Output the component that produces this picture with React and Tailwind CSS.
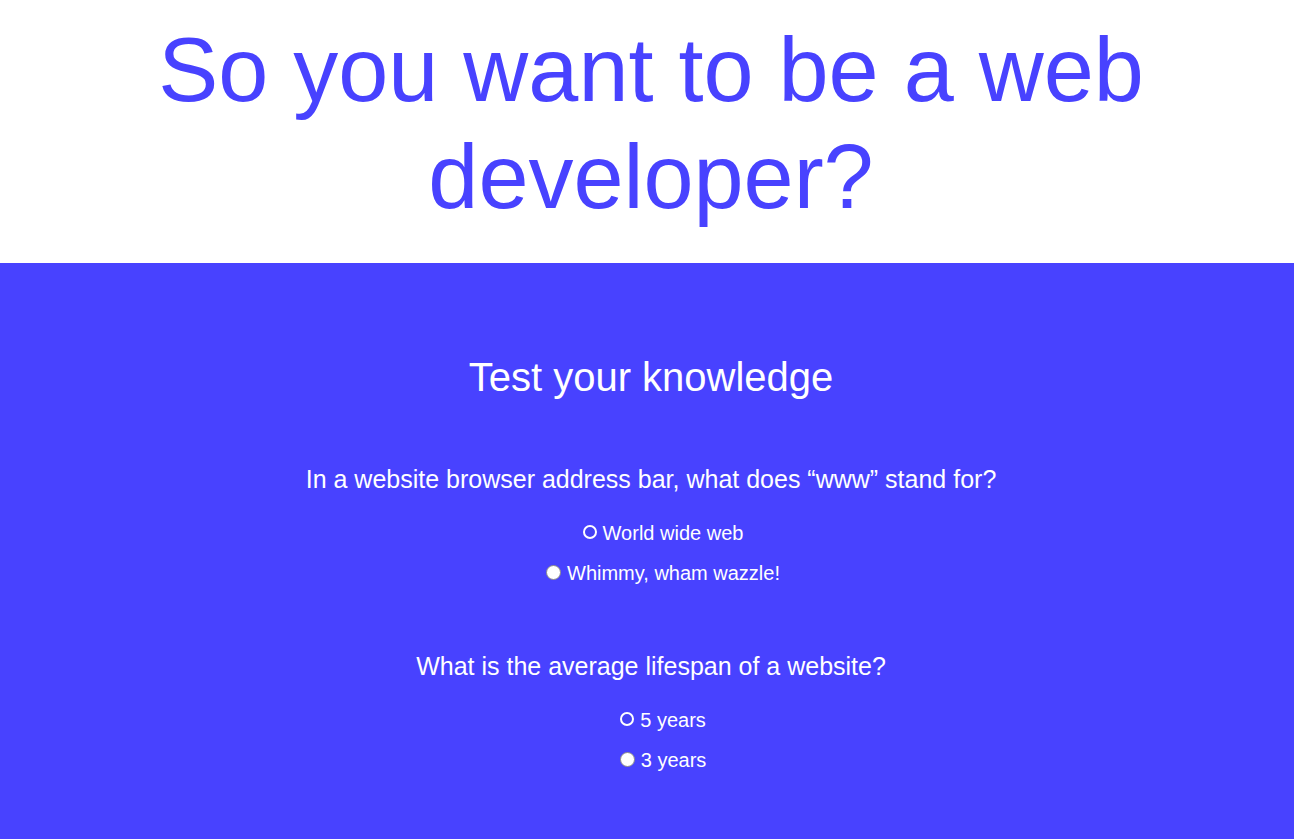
import React from "react";

function Radio({ checked }) {
  return checked ? (
    <span className="inline-block w-[14px] h-[14px] rounded-full border-2 border-white bg-[#4541f5] mr-[6px] box-border -translate-y-[1px]" />
  ) : (
    <span className="inline-block w-[15px] h-[15px] rounded-full border border-[#8a8a8a] bg-white mr-[6px] box-border -translate-y-[1px]" />
  );
}

function Option({ label, checked }) {
  return (
    <label className="flex items-center justify-center h-[40px] text-[20px] text-white pl-[24px]">
      <Radio checked={checked} />
      <span>{label}</span>
    </label>
  );
}

export default function App() {
  return (
    <div className="min-h-[839px] bg-[#4842ff]" style={{ fontFamily: '"Liberation Sans", Arial, sans-serif' }}>
      <header className="bg-white h-[263px] pt-[17px] text-center pl-[8px]">
        <h1 className="text-[90px] leading-[107px] text-[#4842ff] px-[140px]">So you want to be a web developer?</h1>
      </header>
      <main className="text-center text-white pt-[88px] pl-[8px]">
        <h2 className="text-[40px] leading-[52px]">Test your knowledge</h2>
        <section className="mt-[60px]">
          <p className="text-[25px] leading-[32px]">In a website browser address bar, what does “www” stand for?</p>
          <div className="mt-[18px]">
            <Option label="World wide web" checked />
            <Option label="Whimmy, wham wazzle!" />
          </div>
        </section>
        <section className="mt-[57px]">
          <p className="text-[25px] leading-[32px]">What is the average lifespan of a website?</p>
          <div className="mt-[18px]">
            <Option label="5 years" checked />
            <Option label="3 years" />
          </div>
        </section>
      </main>
    </div>
  );
}
